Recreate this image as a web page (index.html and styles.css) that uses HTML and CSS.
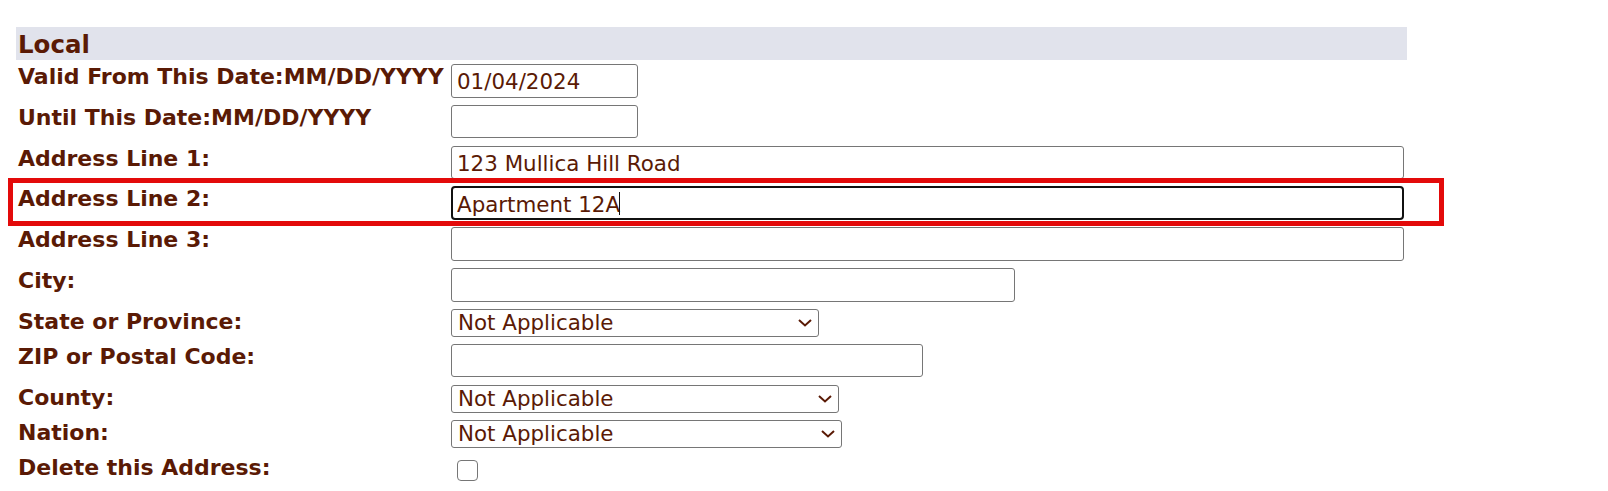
FILE: index.html
```html
<!DOCTYPE html>
<html lang="en">
<head>
<meta charset="utf-8">
<title>Local Address</title>
<link rel="stylesheet" href="styles.css">
</head>
<body>
<form class="addr">
  <div class="section-head">Local</div>
  <div class="rows">
    <label class="lbl">Valid From This Date:MM/DD/YYYY</label>
    <div class="ctl"><input class="txt w-date" type="text" value="01/04/2024"></div>

    <label class="lbl">Until This Date:MM/DD/YYYY</label>
    <div class="ctl"><input class="txt w-date" type="text" value=""></div>

    <label class="lbl">Address Line 1:</label>
    <div class="ctl"><input class="txt w-full" type="text" value="123 Mullica Hill Road"></div>

    <label class="lbl">Address Line 2:</label>
    <div class="ctl focus-wrap"><input class="txt w-full focused" type="text" value="Apartment 12A"><span class="caret"></span></div>

    <label class="lbl">Address Line 3:</label>
    <div class="ctl"><input class="txt w-full" type="text" value=""></div>

    <label class="lbl">City:</label>
    <div class="ctl"><input class="txt w-city" type="text" value=""></div>

    <label class="lbl">State or Province:</label>
    <div class="ctl"><span class="sel-wrap w-state"><select class="sel"><option>Not Applicable</option></select><svg class="chev" width="14" height="8" viewBox="0 0 14 8"><path d="M1 1 L7 6.5 L13 1" fill="none" stroke="currentColor" stroke-width="2"/></svg></span></div>

    <label class="lbl">ZIP or Postal Code:</label>
    <div class="ctl"><input class="txt w-zip" type="text" value=""></div>

    <label class="lbl">County:</label>
    <div class="ctl"><span class="sel-wrap w-county"><select class="sel"><option>Not Applicable</option></select><svg class="chev" width="14" height="8" viewBox="0 0 14 8"><path d="M1 1 L7 6.5 L13 1" fill="none" stroke="currentColor" stroke-width="2"/></svg></span></div>

    <label class="lbl">Nation:</label>
    <div class="ctl"><span class="sel-wrap w-nation"><select class="sel"><option>Not Applicable</option></select><svg class="chev" width="14" height="8" viewBox="0 0 14 8"><path d="M1 1 L7 6.5 L13 1" fill="none" stroke="currentColor" stroke-width="2"/></svg></span></div>

    <label class="lbl">Delete this Address:</label>
    <div class="ctl"><input class="chk" type="checkbox"></div>
  </div>
  <div class="highlight"></div>
</form>
</body>
</html>
```

FILE: styles.css
```css
html, body {
  margin: 0;
  padding: 0;
  background: #ffffff;
}

body {
  font-family: "DejaVu Sans", Verdana, sans-serif;
  color: #5a1a05;
}

.addr {
  position: relative;
  padding: 27px 0 0 16px;
  width: 1391px;
}

.section-head {
  background: #e1e3ec;
  height: 32.5px;
  box-sizing: border-box;
  padding: 5px 0 0 2px;
  font-size: 24.5px;
  font-weight: bold;
  line-height: 26px;
}

.rows {
  display: grid;
  grid-template-columns: 433px 1fr;
  row-gap: 7.2px;
  align-items: start;
  margin-top: 4.5px;
  padding-left: 2px;
}

.lbl {
  font-size: 22px;
  font-weight: bold;
  line-height: 26px;
  white-space: nowrap;
}

.ctl {
  display: flex;
  align-items: flex-start;
}

.txt {
  box-sizing: border-box;
  height: 33.6px;
  margin: 0;
  padding: 2px 5px 0;
  border: 1px solid #767676;
  border-radius: 3px;
  background: #ffffff;
  font-family: "DejaVu Sans", Verdana, sans-serif;
  font-size: 21.4px;
  color: #5a1a05;
  outline: none;
}

.txt.focused {
  border: 2px solid #111111;
  border-radius: 4px;
  padding-left: 4px;
}

.focus-wrap {
  position: relative;
}

.caret {
  position: absolute;
  left: 168px;
  top: 6px;
  width: 1px;
  height: 23px;
  background: #111111;
}

.w-date { width: 187px; }
.w-full { width: 953px; }
.w-city { width: 564px; }
.w-zip { width: 472px; }
.w-state { width: 368px; }
.w-county { width: 388px; }
.w-nation { width: 391px; }

.sel-wrap {
  position: relative;
  display: block;
  height: 28px;
}

.sel {
  -webkit-appearance: none;
  appearance: none;
  box-sizing: border-box;
  width: 100%;
  height: 28px;
  margin: 0;
  padding: 0 30px 0 6px;
  border: 1px solid #767676;
  border-radius: 3px;
  background: #ffffff;
  font-family: "DejaVu Sans", Verdana, sans-serif;
  font-size: 21.4px;
  line-height: 26px;
  color: #5a1a05;
  outline: none;
}

.chev {
  position: absolute;
  right: 7px;
  top: 10px;
  color: #5a1a05;
  pointer-events: none;
}

.chk {
  -webkit-appearance: none;
  appearance: none;
  box-sizing: border-box;
  width: 21px;
  height: 21px;
  margin: 5px 0 0 6px;
  border: 1px solid #767676;
  border-radius: 4px;
  background: #ffffff;
}

.highlight {
  position: absolute;
  left: 8px;
  top: 177.5px;
  width: 1436px;
  height: 48px;
  box-sizing: border-box;
  border: 5px solid #e30a0a;
  pointer-events: none;
}
```
